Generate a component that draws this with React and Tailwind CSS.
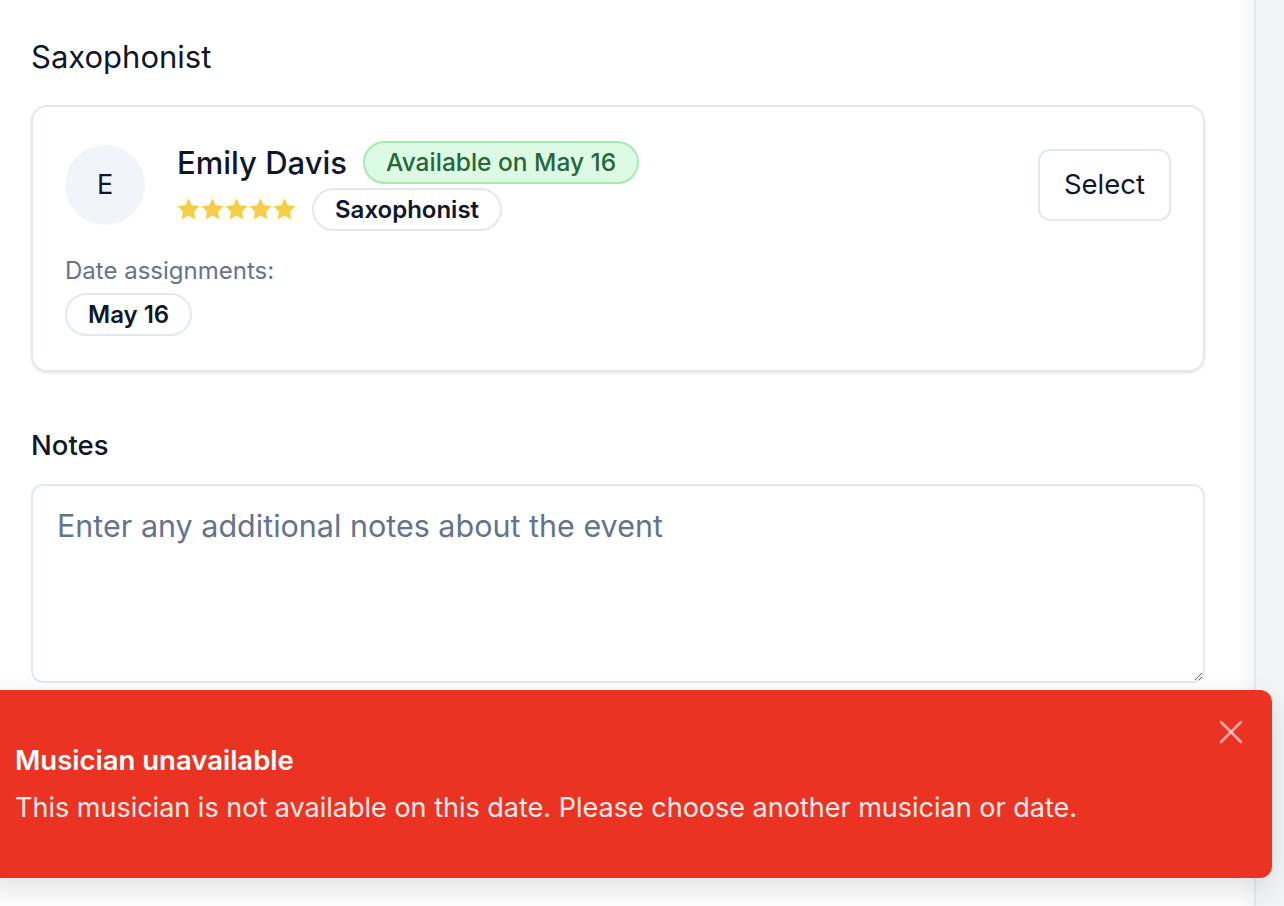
import React from 'react';
import { X } from 'lucide-react';

const StarIcon = () => (
  <svg viewBox="2 2 20 20" className="w-[23px] h-[23px]" fill="#f5cd47">
    <path d="M12 2.2l2.95 6.2 6.8.82-5.02 4.68 1.3 6.73L12 17.3l-6.03 3.33 1.3-6.73L2.25 9.22l6.8-.82z" />
  </svg>
);

const Pill = ({ children }) => (
  <span className="inline-flex items-center h-[43px] px-[21px] rounded-full border-2 border-[#e2e8f0] bg-white text-[24px] font-semibold text-[#0f172a]">
    {children}
  </span>
);

const App = () => {
  return (
    <div className="relative w-[1284px] h-[906px] overflow-hidden flex bg-[#f3f4f6] text-[#0f172a]" style={{ fontFamily: 'Inter, "Noto Sans", sans-serif' }}>
      {/* main panel */}
      <div className="w-[1254px] h-full bg-white flex shrink-0">
        <div className="flex-1 pl-[31px] pr-[33px] pt-[37px]">
          <h2 className="text-[31px] leading-[40px] font-normal">Saxophonist</h2>

          {/* musician card */}
          <div className="mt-[28px] w-[1174px] rounded-[16px] border-2 border-[#e2e8f0] px-[32px] pt-[32px] pb-[34px] shadow-sm">
            <div className="flex items-center justify-between">
              <div className="flex items-center gap-[32px]">
                <div className="w-[80px] h-[80px] rounded-full bg-[#f1f5f9] flex items-center justify-center text-[27px]">E</div>
                <div className="flex flex-col gap-[4px] pt-[2px]">
                  <div className="flex items-center gap-[16px]">
                    <span className="text-[31px] leading-[42px] font-medium">Emily Davis</span>
                    <span className="inline-flex items-center h-[43px] px-[21px] rounded-full border-2 border-[#a3ebb1] bg-[#ddfbe4] text-[24.5px] font-medium text-[#276738]">
                      Available on May 16
                    </span>
                  </div>
                  <div className="flex items-center gap-[16px]">
                    <div className="flex items-center gap-[1px]">
                      <StarIcon /><StarIcon /><StarIcon /><StarIcon /><StarIcon />
                    </div>
                    <Pill>Saxophonist</Pill>
                  </div>
                </div>
              </div>
              <button className="h-[72px] px-[24px] rounded-[12px] border-2 border-[#e2e8f0] bg-white text-[27.5px] font-normal">
                Select
              </button>
            </div>
            <p className="mt-[24px] text-[24px] leading-[32px] text-[#64748b]">Date assignments:</p>
            <div className="mt-[6px] flex">
              <Pill>May 16</Pill>
            </div>
          </div>

          {/* notes */}
          <label className="block mt-[55px] text-[27.5px] leading-[36px] font-medium">Notes</label>
          <textarea
            className="mt-[21px] block w-[1174px] h-[199px] rounded-[12px] border-2 border-[#e2e8f0] px-[24px] py-[20px] text-[30.5px] leading-[40px] placeholder:text-[#64748b] outline-none"
            placeholder="Enter any additional notes about the event"
          />
        </div>
        <div className="w-[16px] h-full bg-gradient-to-r from-white to-[#f6f7f9]" />
      </div>
      <div className="w-[2px] h-full bg-[#e3e7ee] shrink-0" />

      {/* toast */}
      <div className="absolute left-[-20px] top-[690px] w-[1292px] h-[188px] rounded-[12px] bg-[#ea3323] shadow-[0_10px_30px_rgba(0,0,0,0.12)] pl-[35px] pr-[32px] pt-[52px] text-white">
        <button className="absolute right-[21px] top-[22px] text-white/60">
          <X size={40} strokeWidth={1.5} />
        </button>
        <p className="text-[27.5px] leading-[36px] font-semibold">Musician unavailable</p>
        <p className="mt-[12px] text-[27px] leading-[36px] text-white/90">
          This musician is not available on this date. Please choose another musician or date.
        </p>
      </div>
    </div>
  );
};

export default App;
